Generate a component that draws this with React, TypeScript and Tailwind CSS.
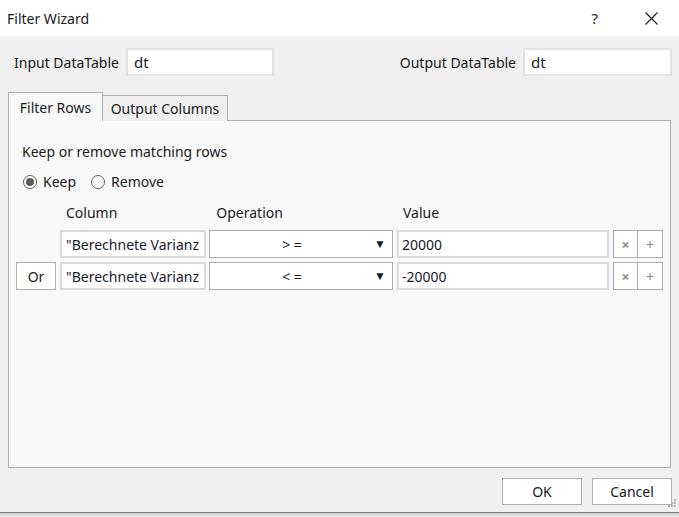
import { FunctionComponent } from 'react'

const font = { fontFamily: '"Noto Sans", "Open Sans", sans-serif' }

const FilterRow: FunctionComponent<{ or?: boolean; op: string; value: string }> = ({ or, op, value }) => {
  return (
    <div className="flex h-[28px] items-stretch">
      {/* or button */}
      <div className="w-[47px] pl-[7px]">
        {or && (
          <div className="flex h-full w-[40px] items-center justify-center border border-[#adadad] bg-white text-[14px] text-[#1a1a1a]">
            Or
          </div>
        )}
      </div>
      <div className="ml-[4px] flex w-[146px] items-center overflow-hidden whitespace-nowrap border-2 border-[#dadada] bg-white pl-[4px] text-[14px] text-[#1a1a2e]">
        "Berechnete Varianz
      </div>
      <div className="ml-[3px] flex w-[184px] items-center border border-[#adadad] bg-white text-[14px] text-[#1a1a1a]">
        <span className="flex-1 text-center">{op}</span>
        <span className="mr-[6px] text-[12px]">▼</span>
      </div>
      <div className="ml-[4px] flex w-[212px] items-center border-2 border-[#dadada] bg-white pl-[3px] text-[14px] text-[#1a1a2e]">
        {value}
      </div>
      <div className="ml-[4px] flex h-full w-[25px] items-center justify-center border border-[#adadad] bg-white text-[14px] font-bold text-[#8a8a8a]">
        ×
      </div>
      <div className="flex h-full w-[25px] items-center justify-center border border-l-0 border-[#adadad] bg-white text-[15px] text-[#8a8a8a]">
        +
      </div>
    </div>
  )
}

const App: FunctionComponent = () => {
  return (
    <div className="relative h-[517px] w-[679px] overflow-hidden bg-[#f0f0f0] text-[#1a1a1a]" style={font}>
      {/* title bar */}
      <div className="flex h-[36px] items-center bg-white">
        <p className="pl-[7px] text-[14px]">Filter Wizard</p>
        <span className="ml-auto mr-[47px] text-[15px]">?</span>
        <svg width="13" height="13" viewBox="0 0 13 13" className="mr-[21px]">
          <path d="M0.5 0.5 L12.5 12.5 M12.5 0.5 L0.5 12.5" stroke="#1a1a1a" strokeWidth="1.1" />
        </svg>
      </div>

      {/* datatables */}
      <div className="mt-[12px] flex h-[28px] items-center">
        <span className="pl-[14px] text-[14px]">Input DataTable</span>
        <div className="ml-[7px] flex h-[28px] w-[148px] items-center border-2 border-[#e3e3e3] bg-white pl-[6px] text-[15px] text-[#1a1a2e]">
          dt
        </div>
        <span className="ml-auto text-[14px]">Output DataTable</span>
        <div className="ml-[7px] mr-[7px] flex h-[28px] w-[149px] items-center border-2 border-[#e3e3e3] bg-white pl-[6px] text-[15px] text-[#1a1a2e]">
          dt
        </div>
      </div>

      {/* tabs */}
      <div className="mt-[16px] flex h-[29px] items-end pl-[8px]">
        <div className="relative z-10 flex h-[29px] w-[95px] items-center justify-center border border-b-0 border-[#adadad] bg-[#f9f9f9] text-[14px]">
          Filter Rows
        </div>
        <div className="flex h-[26px] w-[125px] items-center justify-center border border-b-0 border-l-0 border-[#adadad] bg-[#f0f0f0] text-[14px]">
          Output Columns
        </div>
      </div>
      <div className="-mt-px mx-[8px] h-[348px] border border-[#adadad] bg-[#f9f9f9]">
        <p className="pl-[13px] pt-[20px] text-[14px]">Keep or remove matching rows</p>
        <div className="mt-[9px] flex items-center pl-[14px] text-[14px]">
          <span className="flex h-[14px] w-[14px] items-center justify-center rounded-full border border-[#5a5a5a] bg-white">
            <span className="h-[8px] w-[8px] rounded-full bg-[#5a5a5a]" />
          </span>
          <span className="ml-[6px]">Keep</span>
          <span className="ml-[15px] h-[14px] w-[14px] rounded-full border border-[#5a5a5a] bg-white" />
          <span className="ml-[6px]">Remove</span>
        </div>
        <div className="mt-[10px] flex text-[14px]">
          <span className="pl-[57px]">Column</span>
          <span className="pl-[99px]">Operation</span>
          <span className="pl-[120px]">Value</span>
        </div>
        <div className="mt-[7px] flex flex-col gap-[4px]">
          <FilterRow op="> =" value="20000" />
          <FilterRow or op="< =" value="-20000" />
        </div>
      </div>

      {/* footer */}
      <div className="mt-[10px] flex justify-end gap-[10px] pr-[7px]">
        <div className="flex h-[27px] w-[80px] items-center justify-center border border-[#adadad] bg-white text-[14px]">
          OK
        </div>
        <div className="flex h-[27px] w-[80px] items-center justify-center border border-[#adadad] bg-white text-[14px]">
          Cancel
        </div>
      </div>
      <svg width="12" height="12" viewBox="0 0 12 12" className="absolute right-[2px] top-[498px]">
        <g fill="#b4b4b4">
          <rect x="9" y="1" width="2" height="2" />
          <rect x="6" y="4" width="2" height="2" />
          <rect x="9" y="4" width="2" height="2" />
          <rect x="3" y="7" width="2" height="2" />
          <rect x="6" y="7" width="2" height="2" />
          <rect x="9" y="7" width="2" height="2" />
        </g>
      </svg>

      {/* window edge */}
      <div className="absolute bottom-0 left-0 right-0 h-[5px] border-t border-[#7a7a7a] bg-gradient-to-b from-[#cfcfcf] to-[#e8e8e8]" />
    </div>
  )
}

export default App
